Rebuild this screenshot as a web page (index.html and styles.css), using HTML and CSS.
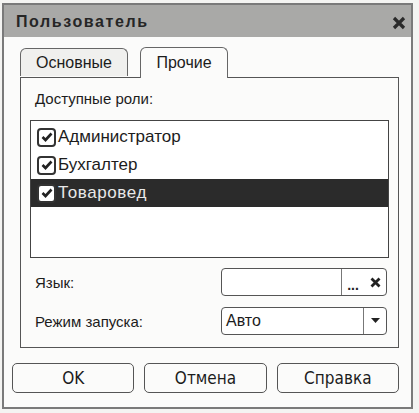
FILE: index.html
```html
<!DOCTYPE html>
<html>

<head>
  <title>Пользователь</title>
  <link rel="stylesheet" href="styles.css">
</head>

<body>
  <div class="window">
    <div class="titlebar">
      <span class="title">Пользователь</span>
      <span class="close"><svg width="14" height="14" viewBox="0 0 14 14"><path d="M2 2 L12 12 M12 2 L2 12" stroke="#2a2a2a" stroke-width="3.2"/></svg></span>
    </div>

    <div class="content">
      <div class="tabs">
        <div class="tab">Основные</div>
        <div class="tab active">Прочие</div>
      </div>

      <div class="panel">
        <div class="caption">Доступные роли:</div>

        <div class="list">
          <div class="row">
            <span class="check"><svg width="12" height="10" viewBox="0 0 12 10"><path d="M1.5 5 L4.5 8 L10.5 1.5" fill="none" stroke="#222" stroke-width="2.6"/></svg></span>
            <span>Администратор</span>
          </div>
          <div class="row">
            <span class="check"><svg width="12" height="10" viewBox="0 0 12 10"><path d="M1.5 5 L4.5 8 L10.5 1.5" fill="none" stroke="#222" stroke-width="2.6"/></svg></span>
            <span>Бухгалтер</span>
          </div>
          <div class="row selected">
            <span class="check"><svg width="12" height="10" viewBox="0 0 12 10"><path d="M1.5 5 L4.5 8 L10.5 1.5" fill="none" stroke="#222" stroke-width="2.6"/></svg></span>
            <span>Товаровед</span>
          </div>
        </div>

        <div class="field-row">
          <label>Язык:</label>
          <div class="input">
            <span class="value"></span>
            <span class="btn dots">...</span>
            <span class="btn clear"><svg width="11" height="11" viewBox="0 0 11 11"><path d="M1.5 1.5 L9.5 9.5 M9.5 1.5 L1.5 9.5" stroke="#222" stroke-width="2.8"/></svg></span>
          </div>
        </div>

        <div class="field-row">
          <label>Режим запуска:</label>
          <div class="input">
            <span class="value">Авто</span>
            <span class="btn arrow"><svg width="9" height="6" viewBox="0 0 9 6"><path d="M0 0 H9 L4.5 5 Z" fill="#222"/></svg></span>
          </div>
        </div>
      </div>

      <div class="buttons">
        <button>OK</button>
        <button>Отмена</button>
        <button>Справка</button>
      </div>
    </div>
  </div>
</body>

</html>
```

FILE: styles.css
```css
body {
  margin: 0;
  padding: 3px 0 0 2px;
  background-color: #f4f4f2;
  font-family: "Liberation Sans", Arial, sans-serif;
  color: #1c1c1c;
}

.window {
  width: 407px;
  height: 402px;
  border: 2px solid #7a7a7a;
  background-color: #fbfbfa;
  display: flex;
  flex-direction: column;
}

.titlebar {
  height: 32px;
  background-color: #a9a9a7;
  display: flex;
  align-items: center;
  justify-content: space-between;
  padding: 0 5px 0 12px;
}

.title {
  font-weight: bold;
  font-size: 16px;
  color: #262626;
  letter-spacing: 1.6px;
  padding-top: 2px;
}

.close {
  display: flex;
  padding-top: 3px;
}

.content {
  display: flex;
  flex-direction: column;
  padding: 10px 12px 0 6px;
}

.tabs {
  display: flex;
  gap: 12px;
  padding-left: 10px;
  align-items: flex-end;
}

.tab {
  height: 28px;
  width: 108px;
  box-sizing: border-box;
  border: 1px solid #666;
  border-bottom: none;
  border-radius: 6px 6px 0 0;
  background-color: #f0f0ee;
  display: flex;
  align-items: center;
  justify-content: center;
  font-size: 16px;
  margin-bottom: 1px;
}

.tab.active {
  width: 88px;
  height: 31px;
  background-color: #fbfbfa;
  margin-bottom: -1px;
  position: relative;
  z-index: 1;
}

.panel {
  margin-left: 10px;
  height: 271px;
  box-sizing: border-box;
  border: 1px solid #555;
  padding: 12px 9px 0 9px;
  display: flex;
  flex-direction: column;
}

.caption {
  font-size: 15px;
  padding-left: 5px;
  height: 20px;
}

.list {
  margin-top: 10px;
  height: 138px;
  box-sizing: border-box;
  border: 1px solid #444;
  background-color: #fff;
  padding-top: 2px;
}

.row {
  height: 28px;
  display: flex;
  align-items: center;
  gap: 2px;
  padding-left: 6px;
  font-size: 17px;
}

.row.selected {
  background-color: #2b2b2b;
  color: #e8e8e8;
  letter-spacing: 0.6px;
}

.check {
  width: 19px;
  height: 19px;
  box-sizing: border-box;
  border: 2px solid #333;
  border-radius: 4px;
  background-color: #fff;
  display: flex;
  align-items: center;
  justify-content: center;
}

.field-row {
  display: flex;
  align-items: center;
  justify-content: space-between;
  margin-top: 10px;
  padding-left: 5px;
  padding-right: 2px;
}

.field-row + .field-row {
  margin-top: 11px;
}

.field-row label {
  font-size: 15px;
}

.input {
  width: 166px;
  height: 28px;
  box-sizing: border-box;
  border: 1px solid #555;
  border-radius: 4px;
  background-color: #fff;
  display: flex;
  align-items: stretch;
}

.value {
  flex: 1;
  display: flex;
  align-items: center;
  padding-left: 4px;
  font-size: 16px;
}

.btn {
  display: flex;
  align-items: center;
  justify-content: center;
  font-weight: bold;
  color: #222;
}

.dots {
  width: 22px;
  border-left: 1px solid #777;
  font-size: 14px;
  padding-top: 6px;
}

.clear {
  width: 22px;
}

.arrow {
  width: 22px;
  border-left: 1px solid #777;
}

.buttons {
  display: flex;
  gap: 10px;
  margin-top: 15px;
  padding-left: 2px;
}

.buttons button {
  width: 123px;
  height: 30px;
  border: 1px solid #555;
  border-radius: 5px;
  background-color: #fbfbfa;
  font-family: "Liberation Sans Narrow", "DejaVu Sans Condensed", sans-serif;
  font-size: 17px;
  color: #1c1c1c;
}
```
